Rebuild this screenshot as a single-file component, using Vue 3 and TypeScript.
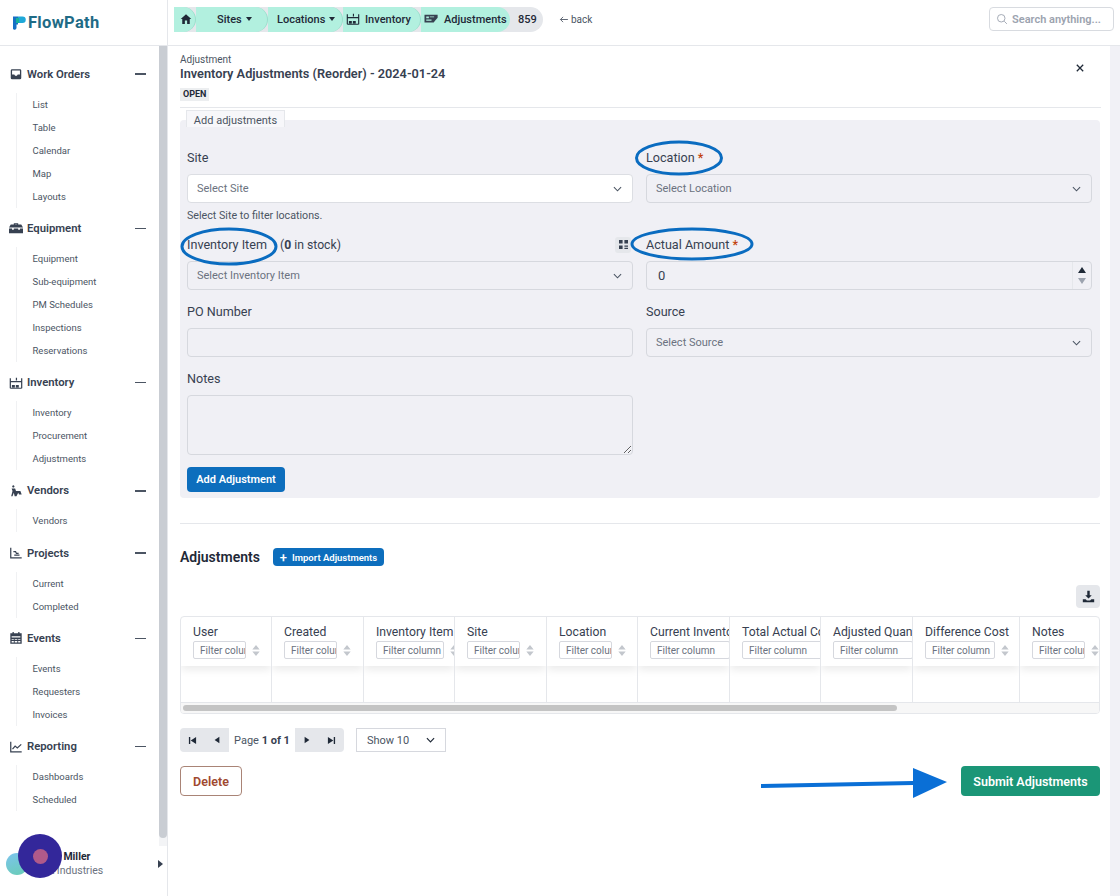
<template>
  <div class="page">
    <aside class="sidebar">
      <div class="logo">
        <svg class="logo-mark" viewBox="0 0 14 16" width="14" height="16">
          <path d="M1 1.500h5v8H4.500V13a2 2 0 0 1-3.500 1z" fill="#1670c4" />
          <path d="M6 1.500h4.500a3.200 3.200 0 0 1 0 6.500H6z" fill="#1fa8d8" />
          <path d="M4 3h3v5H4z" fill="#15b29a" />
        </svg>
        <span>FlowPath</span>
      </div>
      <div class="side-body">
        <nav class="nav">
          <section v-for="g in groups" :key="g.title" class="group">
            <div class="group-head">
              <svg class="group-icon" viewBox="0 0 16 16" width="14" height="14">
                <path :d="icons[g.icon]" :fill="g.solid ? '#374151' : 'none'" :stroke="g.solid ? 'none' : '#374151'" stroke-width="1.4" />
              </svg>
              <span class="group-title">{{ g.title }}</span>
              <span class="collapse"></span>
            </div>
            <ul class="group-list">
              <li v-for="item in g.items" :key="item">{{ item }}</li>
            </ul>
          </section>
        </nav>
        <div class="side-track"><div class="side-thumb"></div></div>
      </div>
      <div class="user">
        <span class="avatar"></span>
        <div class="user-text">
          <div class="user-name">Chris Miller</div>
          <div class="user-org">Oak Industries</div>
        </div>
        <span class="user-caret"></span>
      </div>
      <div class="launcher"><span></span></div>
    </aside>

    <div class="main-col">
      <header class="topbar">
        <div class="crumbs">
          <div class="crumb crumb-home">
            <svg viewBox="0 0 16 16" width="12" height="12"><path :d="icons.home" fill="#1f2937" /></svg>
          </div>
          <div class="crumb crumb-sites">Sites <i class="tri"></i></div>
          <div class="crumb crumb-locations">Locations <i class="tri"></i></div>
          <div class="crumb crumb-inventory">
            <svg viewBox="0 0 16 16" width="14" height="14"><path :d="icons.warehouse" fill="none" stroke="#1f2937" stroke-width="1.3" /></svg>
            Inventory
          </div>
          <div class="crumb crumb-adjust">
            <svg viewBox="0 0 16 16" width="15" height="14"><path :d="icons.ticket" fill="#374151" /></svg>
            Adjustments
          </div>
          <div class="crumb-count">859</div>
        </div>
        <a class="back">
          <svg viewBox="0 0 10 8" width="9" height="7"><path d="M10 4H1.500M4.500 1L1.500 4l3 3" fill="none" stroke="#4b5563" stroke-width="1" /></svg>
          back
        </a>
        <label class="search">
          <svg viewBox="0 0 16 16" width="12" height="12"><circle cx="7" cy="7" r="5" fill="none" stroke="#9ca3af" stroke-width="1.2" /><path d="M11 11l3.500 3.500" stroke="#9ca3af" stroke-width="1.2" /></svg>
          <input placeholder="Search anything..." />
        </label>
      </header>

      <div class="scroller">
        <main class="content">
          <div class="title-row">
            <div class="title-block">
              <div class="kicker">Adjustment</div>
              <h1>Inventory Adjustments (Reorder) - 2024-01-24</h1>
              <span class="badge">OPEN</span>
            </div>
            <button class="close" aria-label="Close">
              <svg viewBox="0 0 10 10" width="8" height="8"><path d="M1 1l8 8M9 1l-8 8" stroke="#1f2937" stroke-width="1.6" /></svg>
            </button>
          </div>
          <hr class="rule-top" />

          <div class="tab">Add adjustments</div>
          <form class="panel" @submit.prevent>
            <div class="fields">
              <div class="field">
                <div class="label">Site</div>
                <div class="select select-on">Select Site <svg class="chev" viewBox="0 0 10 6" width="9" height="6"><path d="M1 1l4 4 4-4" fill="none" stroke="#4b5563" stroke-width="1.2" /></svg></div>
                <div class="help">Select Site to filter locations.</div>
              </div>
              <div class="field">
                <div class="label">Location <b class="req">*</b></div>
                <div class="select">Select Location <svg class="chev" viewBox="0 0 10 6" width="9" height="6"><path d="M1 1l4 4 4-4" fill="none" stroke="#4b5563" stroke-width="1.2" /></svg></div>
              </div>
              <div class="field">
                <div class="label label-split">
                  <span>Inventory Item <span class="stock">(<b>0</b> in stock)</span></span>
                  <span class="qr">
                    <svg viewBox="0 0 10 10" width="9" height="9"><path d="M0 0h4v4H0zM6 0h4v4H6zM0 6h4v4H0zM6 6h4v1.400H6zM6 8.600h4V10H6z" fill="#374151" /></svg>
                  </span>
                </div>
                <div class="select">Select Inventory Item <svg class="chev" viewBox="0 0 10 6" width="9" height="6"><path d="M1 1l4 4 4-4" fill="none" stroke="#4b5563" stroke-width="1.2" /></svg></div>
              </div>
              <div class="field">
                <div class="label">Actual Amount <b class="req">*</b></div>
                <div class="select number">
                  <span>0</span>
                  <div class="spin">
                    <svg viewBox="0 0 8 6" width="8" height="6"><path d="M4 0l4 6H0z" fill="#1f2937" /></svg>
                    <svg viewBox="0 0 8 6" width="8" height="6"><path d="M4 6l4-6H0z" fill="#9ca3af" /></svg>
                  </div>
                </div>
              </div>
              <div class="field">
                <div class="label">PO Number</div>
                <input class="text-input" />
              </div>
              <div class="field">
                <div class="label">Source</div>
                <div class="select">Select Source <svg class="chev" viewBox="0 0 10 6" width="9" height="6"><path d="M1 1l4 4 4-4" fill="none" stroke="#4b5563" stroke-width="1.2" /></svg></div>
              </div>
              <div class="field">
                <div class="label">Notes</div>
                <textarea class="notes"></textarea>
              </div>
            </div>
            <button class="add-btn">Add Adjustment</button>
          </form>

          <hr class="rule-mid" />

          <div class="list-head">
            <h2>Adjustments</h2>
            <button class="import-btn"><span class="plus">+</span> Import Adjustments</button>
          </div>
          <div class="tools">
            <button class="download" aria-label="Download">
              <svg viewBox="0 0 16 16" width="13" height="13"><path d="M6.500 1h3v5.500H12L8 10.500 4 6.500h2.500z M1 11.500h3.500L6 13h4l1.500-1.500H15V15H1z" fill="#1f2937" /></svg>
            </button>
          </div>

          <div class="table">
            <div class="cols">
              <div v-for="c in columns" :key="c.name" class="col" :style="{ width: c.width + 'px' }">
                <div class="col-head">
                  <div class="col-name">{{ c.name }}</div>
                  <div class="col-filter">
                    <input class="filter" :style="{ width: c.filter + 'px' }" placeholder="Filter column" />
                    <svg class="sort" viewBox="0 0 8 12" width="8" height="11"><path d="M4 0l4 5H0zM4 12l4-5H0z" fill="#c3c7cd" /></svg>
                  </div>
                </div>
                <div class="col-body"></div>
              </div>
            </div>
            <div class="h-scroll"><div class="h-thumb"></div></div>
          </div>

          <div class="pager">
            <div class="pager-btns pager-first">
              <svg viewBox="0 0 10 10" width="9" height="9"><path d="M1 1h1.500v8H1zM9 1v8L3 5z" fill="#1f2937" /></svg>
              <svg viewBox="0 0 10 10" width="8" height="8"><path d="M8 1v8L2 5z" fill="#1f2937" /></svg>
            </div>
            <span class="page-text">Page <b>1 of 1</b></span>
            <div class="pager-btns pager-last">
              <svg viewBox="0 0 10 10" width="8" height="8"><path d="M2 1v8l6-4z" fill="#1f2937" /></svg>
              <svg viewBox="0 0 10 10" width="9" height="9"><path d="M9 1H7.500v8H9zM1 1v8l6-4z" fill="#1f2937" /></svg>
            </div>
            <div class="show">Show 10 <svg viewBox="0 0 10 6" width="9" height="6"><path d="M1 1l4 4 4-4" fill="none" stroke="#1f2937" stroke-width="1.3" /></svg></div>
          </div>

          <div class="actions">
            <button class="delete">Delete</button>
            <button class="submit">Submit Adjustments</button>
          </div>
        </main>
        <div class="main-track"></div>
      </div>
    </div>

    <!-- annotations drawn over the screenshot -->
    <svg class="marks" viewBox="0 0 1120 896" width="1120" height="896">
      <ellipse cx="679" cy="158" rx="42.500" ry="16" />
      <ellipse cx="229" cy="246.500" rx="47" ry="17.500" />
      <ellipse cx="692" cy="244" rx="60" ry="15" />
      <path class="arrow" d="M761 784l152-3v-13l34 14-34 16v-13l-152 3z" />
    </svg>
  </div>
</template>

<script setup lang="ts">
type Group = { title: string; icon: string; solid?: boolean; items: string[] }

const icons: Record<string, string> = {
  home: 'M8 1.500l7 6.500h-2v6.500H9.500V10h-3v4.500H3V8H1z',
  tray: 'M3.500 2.500h9a1.500 1.500 0 0 1 1.500 1.500v8.500a1.500 1.500 0 0 1-1.500 1.500h-9A1.500 1.500 0 0 1 2 12.500V4a1.500 1.500 0 0 1 1.500-1.500zm0 1.500v4.500H6l1 1.500h2l1-1.500h2.500V4z',
  toolbox: 'M5.500 4V2.500h5V4H14l2 3.500H0L2 4zm1.200 0h2.600v-.400H6.700zM0 8.500h3.500V10h2V8.500h5V10h2V8.500H16V14H0z',
  warehouse: 'M1.500 14V2.500M14.500 14V2.500M1.500 6.500h13M1.500 14h13M4 11h2v1.500H4zM8.500 11h2v1.500h-2zM8.500 2v3',
  vendors: 'M5 1.500a1.300 1.300 0 1 1-.1 0zM3 5h4l1 3h5l1.500 4h-3l-1-2-2 4H6.500L5.500 10 4 14H2.500L4 8z',
  projects: 'M2 2v11.500h12.500M5 6.500h2.500l1 2H11M6 10.500h6',
  calendar: 'M4 1h1.500v1.500h5V1H12v1.500h2.500v12h-13v-12H4zM3 6v1.500h10V6zm0 3v1h2.500V9zm3.500 0v1h3V9zm4 0v1H13V9zM3 11.500v1.500h2.500v-1.500zm3.500 0v1.500h3v-1.500zm4 0v1.500H13v-1.500z',
  chart: 'M2 2v11.500h12.500M4 10.500L7 7l2.500 2L14 5',
  ticket: 'M0 3h15v3.500l-3 3.500-1.500 2H0zm2 2v2h3V5zm4 0v1h5V5zm-4 3.500v1.500h6V8.500z',
}

const groups: Group[] = [
  { title: 'Work Orders', icon: 'tray', solid: true, items: ['List', 'Table', 'Calendar', 'Map', 'Layouts'] },
  { title: 'Equipment', icon: 'toolbox', solid: true, items: ['Equipment', 'Sub-equipment', 'PM Schedules', 'Inspections', 'Reservations'] },
  { title: 'Inventory', icon: 'warehouse', items: ['Inventory', 'Procurement', 'Adjustments'] },
  { title: 'Vendors', icon: 'vendors', solid: true, items: ['Vendors'] },
  { title: 'Projects', icon: 'projects', items: ['Current', 'Completed'] },
  { title: 'Events', icon: 'calendar', solid: true, items: ['Events', 'Requesters', 'Invoices'] },
  { title: 'Reporting', icon: 'chart', items: ['Dashboards', 'Scheduled'] },
]

const columns = [
  { name: 'User', width: 91, filter: 53 },
  { name: 'Created', width: 92, filter: 53 },
  { name: 'Inventory Item', width: 91, filter: 68 },
  { name: 'Site', width: 92, filter: 53 },
  { name: 'Location', width: 91, filter: 53 },
  { name: 'Current Inventory', width: 92, filter: 80 },
  { name: 'Total Actual Cost', width: 91, filter: 80 },
  { name: 'Adjusted Quantity', width: 92, filter: 80 },
  { name: 'Difference Cost', width: 107, filter: 70 },
  { name: 'Notes', width: 80, filter: 53 },
]
</script>

<style>
html, body { margin: 0; background: #fff; }
</style>

<style scoped>
.page {
  position: relative;
  display: flex;
  width: 1120px;
  height: 896px;
  overflow: hidden;
  font-family: Roboto, "Noto Sans", sans-serif;
  color: #374151;
}
button, input, textarea { font-family: inherit; }

.sidebar {
  position: relative;
  width: 168px;
  flex: none;
  display: flex;
  flex-direction: column;
  border-right: 1px solid #e5e7eb;
  box-sizing: border-box;
}
.logo {
  height: 46px;
  box-sizing: border-box;
  flex: none;
  display: flex;
  align-items: center;
  gap: 2px;
  padding-left: 12px;
  border-bottom: 1px solid #e5e7eb;
  font: 700 16.500px Roboto, sans-serif;
  letter-spacing: .3px;
  color: #1f6b86;
}
.logo-mark { flex: none; }
.side-body { flex: 1; display: flex; min-height: 0; }
.nav { flex: 1; padding-top: 18px; min-width: 0; }
.group { margin-bottom: 10.750px; }
.group-head {
  height: 20px;
  display: flex;
  align-items: center;
  padding: 0 13px 0 9px;
}
.group-icon { flex: none; margin-right: 4px; }
.group-title { flex: 1; font-size: 11.300px; font-weight: 600; color: #374151; }
.collapse { width: 11px; height: 1.500px; background: #4b5563; }
.group-list {
  list-style: none;
  margin: 8.500px 0 0 15.500px;
  padding: 0 0 0 16px;
  border-left: 1px solid #f0f1f3;
}
.group-list li { height: 23px; line-height: 23px; font-size: 9.500px; color: #4b5563; }
.side-track { width: 8px; flex: none; background: #f3f4f6; }
.side-thumb { height: 792px; background: #c9cdd3; border-radius: 0 0 4px 4px; }

.user {
  height: 50px;
  flex: none;
  display: flex;
  align-items: center;
  position: relative;
  padding: 0 0 14px 6px;
  box-sizing: border-box;
}
.avatar {
  width: 22px;
  height: 22px;
  border-radius: 50%;
  flex: none;
  background: linear-gradient(160deg, #7cc4ee, #69cdb5);
}
.user-text { margin-left: 8px; line-height: 14px; }
.user-name { font-size: 10.500px; font-weight: 700; color: #1f2937; white-space: nowrap; }
.user-org { font-size: 10.500px; color: #6b7280; white-space: nowrap; }
.user-caret {
  position: absolute;
  right: 4px;
  top: 13.500px;
  border-left: 5px solid #374151;
  border-top: 4.500px solid transparent;
  border-bottom: 4.500px solid transparent;
}
.launcher {
  position: absolute;
  left: 18px;
  top: 834px;
  width: 44px;
  height: 44px;
  border-radius: 50%;
  background: #33279a;
  display: grid;
  place-items: center;
}
.launcher span { width: 15px; height: 15px; border-radius: 50%; background: #b05a8a; }

.main-col { flex: 1; min-width: 0; display: flex; flex-direction: column; }
.topbar {
  height: 46px;
  box-sizing: border-box;
  flex: none;
  display: flex;
  align-items: center;
  padding: 0 6px 7px 6px;
  border-bottom: 1px solid #e5e7eb;
}
.crumbs {
  display: flex;
  height: 25px;
  background: #e5e7eb;
  border-radius: 0 13px 13px 0;
  font-size: 11px;
  font-weight: 500;
  color: #1f2937;
}
.crumb {
  display: flex;
  align-items: center;
  gap: 5px;
  box-sizing: border-box;
  background: #b2f0df;
  border-right: 1px solid #97dfcb;
  border-radius: 0 13px 13px 0;
  white-space: nowrap;
}
.crumb-home { width: 22px; padding-left: 6px; }
.crumb-sites { width: 72px; padding-left: 21px; }
.crumb-locations { width: 75px; padding-left: 9px; }
.crumb-inventory { width: 78px; padding-left: 3px; }
.crumb-adjust { width: 89px; padding-left: 3px; border-right: 0; }
.crumb-count { width: 33px; padding-left: 8px; box-sizing: border-box; line-height: 25px; font-weight: 500; }
.tri {
  border-top: 4px solid #1f2937;
  border-left: 3.500px solid transparent;
  border-right: 3.500px solid transparent;
  margin-left: -1px;
}
.back { margin-left: 16px; font-size: 10px; color: #4b5563; display: flex; align-items: center; gap: 3px; }
.search {
  margin-left: auto;
  width: 125px;
  height: 24px;
  box-sizing: border-box;
  border: 1px solid #d8dbe0;
  border-radius: 4px;
  display: flex;
  align-items: center;
  gap: 4px;
  padding-left: 6px;
  background: #fff;
}
.search input {
  border: 0;
  outline: 0;
  width: 92px;
  padding: 0;
  font-size: 11px;
  font-weight: 600;
}
.search input::placeholder { color: #9ca3af; opacity: 1; }

.scroller { flex: 1; min-height: 0; display: flex; }
.content { flex: 1; min-width: 0; padding: 8px 10px 0 12px; box-sizing: border-box; }
.main-track { width: 10px; flex: none; background: #f1f1f6; }

.title-row { display: flex; justify-content: space-between; height: 46px; padding-right: 14px; }
.kicker { font-size: 10px; line-height: 12px; color: #4b5563; }
h1 { margin: 0; font-size: 12.750px; line-height: 16px; font-weight: 600; color: #374151; }
.badge {
  display: inline-block;
  margin-top: 6px;
  padding: 0 3px;
  height: 13px;
  line-height: 13px;
  font-size: 9px;
  font-weight: 700;
  background: #eceef0;
  color: #1f2937;
  vertical-align: top;
}
.close {
  border: 0;
  background: none;
  padding: 0;
  height: 12px;
  width: 12px;
  margin-top: 8px;
  display: grid;
  place-items: center;
}
.rule-top { margin: 7px -1px 0 0; border: 0; border-top: 1px solid #e5e7eb; }

.tab {
  margin: 2px 0 0 6px;
  width: 99px;
  height: 17px;
  box-sizing: border-box;
  border: 1px solid #e5e7eb;
  border-bottom: 0;
  background: #f7f7fa;
  font-size: 11px;
  line-height: 20px;
  text-align: center;
  color: #4b5563;
  position: relative;
  z-index: 1;
  margin-bottom: -7px;
}
.panel {
  background: #f0f0f5;
  border-radius: 4px;
  padding: 28px 7px 6px;
  height: 378px;
  box-sizing: border-box;
}
.fields {
  display: grid;
  grid-template-columns: 446px 446px;
  column-gap: 13px;
  row-gap: 12px;
  align-items: start;
}
.label { font-size: 12.600px; line-height: 19px; height: 19px; margin-bottom: 7px; color: #374151; }
.label-split { display: flex; justify-content: space-between; align-items: center; }
.stock { margin-left: 10px; font-size: 12.200px; }
.stock b { font-weight: 700; }
.req { color: #c2410c; font-weight: 500; }
.qr {
  width: 16px;
  height: 16px;
  margin-right: 2px;
  background: #e5e7eb;
  border-radius: 3px;
  display: grid;
  place-items: center;
}
.select {
  height: 29px;
  box-sizing: border-box;
  display: flex;
  align-items: center;
  justify-content: space-between;
  padding: 0 10px 0 9px;
  border: 1px solid #d6d8de;
  border-radius: 4px;
  font-size: 11px;
  color: #6b7280;
}
.select-on { background: #fff; border-color: #dcdee3; }
.help { margin-top: 6px; font-size: 10.700px; line-height: 14px; color: #4b5563; }
.number { padding-left: 11px; padding-right: 0; color: #374151; font-size: 13px; }
.spin {
  width: 19px;
  height: 100%;
  border-left: 1px solid #e5e7eb;
  display: flex;
  flex-direction: column;
  align-items: center;
  justify-content: space-around;
  padding: 3px 0;
  box-sizing: border-box;
}
.text-input, .notes {
  display: block;
  width: 100%;
  box-sizing: border-box;
  background: transparent;
  border: 1px solid #d6d8de;
  border-radius: 4px;
  outline: 0;
}
.text-input { height: 29px; }
.notes { height: 60px; resize: vertical; }
.add-btn {
  margin-top: 12px;
  height: 25px;
  width: 98px;
  border: 0;
  border-radius: 4px;
  padding: 0;
  background: #0d6ebd;
  color: #fff;
  font-size: 11px;
  font-weight: 600;
}

.rule-mid { margin: 25px 0 0; border: 0; border-top: 1px solid #e5e7eb; }
.list-head { display: flex; align-items: center; gap: 12px; margin-top: 24px; height: 18px; }
h2 { margin: 0; font-size: 14px; font-weight: 600; color: #1f2937; line-height: 18px; width: 81px; white-space: nowrap; }
.import-btn {
  width: 111px;
  height: 18px;
  border: 0;
  border-radius: 4px;
  padding: 0;
  background: #0d6ebd;
  color: #fff;
  font-size: 9.500px;
  font-weight: 600;
  display: flex;
  align-items: center;
  justify-content: center;
  gap: 5px;
  white-space: nowrap;
}
.plus { font-size: 13px; font-weight: 500; line-height: 1; }
.tools { display: flex; justify-content: flex-end; margin-top: 19px; }
.download {
  width: 24px;
  height: 23px;
  border: 0;
  padding: 0;
  border-radius: 4px;
  background: #e5e7eb;
  display: grid;
  place-items: center;
}

.table {
  margin-top: 8px;
  height: 98px;
  box-sizing: border-box;
  border: 1px solid #e5e7eb;
  border-radius: 4px;
  overflow: hidden;
  display: flex;
  flex-direction: column;
}
.cols { display: flex; flex: 1; min-height: 0; }
.col {
  flex: none;
  box-sizing: border-box;
  border-right: 1px solid #e5e7eb;
  overflow: hidden;
  display: flex;
  flex-direction: column;
}
.col:last-child { border-right: 0; }
.col-head {
  height: 49px;
  box-sizing: border-box;
  padding: 7px 0 0 12px;
  box-shadow: 0 4px 8px rgba(0, 0, 0, .08);
  position: relative;
}
.col-name { font-size: 12.200px; line-height: 16px; white-space: nowrap; color: #374151; }
.col-filter { display: flex; align-items: center; gap: 6px; margin-top: 1px; }
.filter {
  flex: none;
  height: 18px;
  box-sizing: border-box;
  padding: 0 0 0 6px;
  border: 1px solid #d6d8de;
  border-radius: 2px;
  outline: 0;
  font-size: 10px;
}
.filter::placeholder { color: #6b7280; opacity: 1; }
.sort { flex: none; }
.col-body { flex: 1; }
.h-scroll { height: 11px; flex: none; padding: 2px; box-sizing: border-box; background: #f7f7f7; border-top: 1px solid #e5e7eb; }
.h-thumb { width: 714px; height: 6px; background: #c4c4c4; border-radius: 3px; }

.pager { display: flex; align-items: center; margin-top: 14px; height: 24px; }
.pager-btns {
  flex: none;
  width: 49px;
  height: 24px;
  background: #e5e7eb;
  display: flex;
  align-items: center;
  justify-content: space-around;
}
.pager-first { border-radius: 4px 0 0 4px; }
.pager-last { border-radius: 0 4px 4px 0; }
.page-text { width: 66px; text-align: center; font-size: 11px; color: #4b5563; white-space: nowrap; }
.page-text b { color: #374151; font-weight: 700; }
.show {
  margin-left: 12px;
  width: 90px;
  height: 24px;
  box-sizing: border-box;
  border: 1px solid #d6d8de;
  display: flex;
  align-items: center;
  justify-content: space-between;
  padding: 0 10px;
  font-size: 11px;
  color: #4b5563;
}

.actions { display: flex; justify-content: space-between; margin-top: 14px; }
.delete {
  width: 62px;
  height: 30px;
  border: 1px solid #a98476;
  border-radius: 4px;
  background: #fff;
  padding: 0;
  color: #a0492f;
  font-size: 12.500px;
  font-weight: 600;
}
.submit {
  width: 139px;
  height: 30px;
  border: 0;
  border-radius: 4px;
  padding: 0;
  background: #1b9677;
  color: #fff;
  font-size: 12.500px;
  font-weight: 600;
}

.marks { position: absolute; left: 0; top: 0; pointer-events: none; }
.marks ellipse { fill: none; stroke: #0a6cc0; stroke-width: 3; }
.marks .arrow { fill: #0a6fd6; }
</style>
